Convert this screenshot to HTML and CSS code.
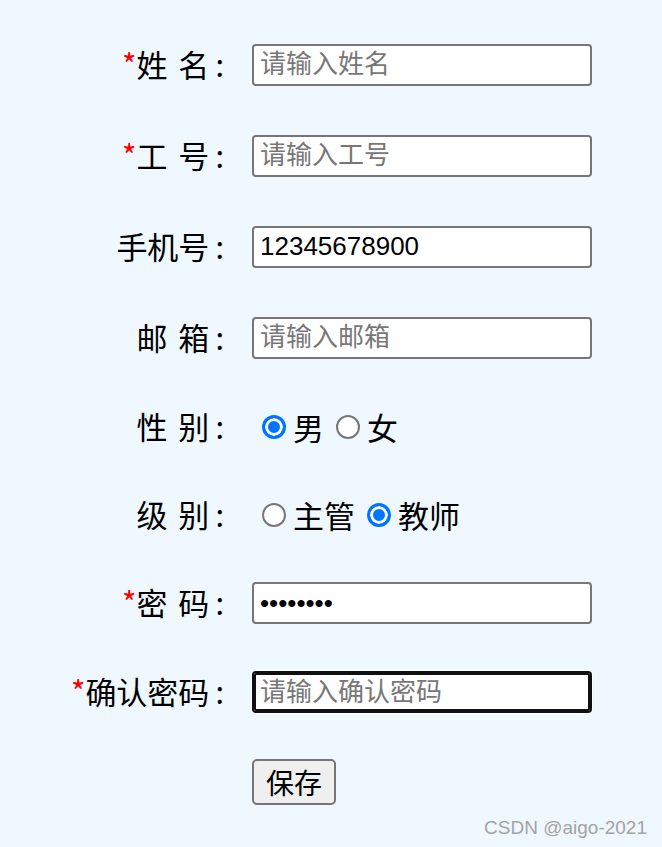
FILE: index.html
```html
<!DOCTYPE html>
<html lang="zh-CN">
  <head>
    <meta charset="UTF-8" />
    <meta name="viewport" content="width=device-width, initial-scale=1.0" />
    <title>添加员工</title>
    <link rel="stylesheet" href="styles.css">
  </head>

  <body>
    <div class="main">
      <form class="staff_form" onsubmit="return false">
        <div class="row">
          <label class="label colon" for="name"><span class="req">姓 名</span></label>
          <input class="field" id="name" type="text" placeholder="请输入姓名" />
        </div>
        <div class="row">
          <label class="label colon" for="job_no"><span class="req">工 号</span></label>
          <input class="field" id="job_no" type="text" placeholder="请输入工号" />
        </div>
        <div class="row">
          <label class="label colon" for="phone">手机号</label>
          <input class="field" id="phone" type="text" value="12345678900" />
        </div>
        <div class="row">
          <label class="label colon" for="email">邮 箱</label>
          <input class="field" id="email" type="text" placeholder="请输入邮箱" />
        </div>
        <div class="row row_short">
          <span class="label colon">性 别</span>
          <div class="choices">
            <label class="choice"><input type="radio" name="sex" checked />男</label>
            <label class="choice"><input type="radio" name="sex" />女</label>
          </div>
        </div>
        <div class="row row_short">
          <span class="label colon">级 别</span>
          <div class="choices">
            <label class="choice"><input type="radio" name="level" />主管</label>
            <label class="choice"><input type="radio" name="level" checked />教师</label>
          </div>
        </div>
        <div class="row row_short">
          <label class="label colon" for="pwd"><span class="req">密 码</span></label>
          <input class="field" id="pwd" type="password" value="12345678" />
        </div>
        <div class="row row_mid">
          <label class="label colon" for="pwd2"><span class="req">确认密码</span></label>
          <input class="field field_focus" id="pwd2" type="password" placeholder="请输入确认密码" />
        </div>
        <div class="row row_mid">
          <span class="label"></span>
          <button class="save_btn" type="submit">保存</button>
        </div>
      </form>
      <div class="mark">CSDN @aigo-2021</div>
    </div>
  </body>
</html>
```

FILE: styles.css
```css
html,
body {
  margin: 0;
  padding: 0;
  height: 100%;
  background-color: #f0f8ff;
  font-family: "Noto Sans CJK SC", sans-serif;
  font-size: 31px;
  color: #000;
}

.main {
  position: relative;
  height: 100%;
  padding-top: 19px;
  box-sizing: border-box;
}

.staff_form {
  display: flex;
  flex-direction: column;
}

.row {
  height: 91px;
  display: flex;
  align-items: center;
}

.row_short {
  height: 88px;
}

.row_mid {
  height: 90px;
}

.label {
  width: 224px;
  margin-right: 28px;
  text-align: right;
  word-spacing: 4px;
  line-height: 40px;
  padding-bottom: 2px;
  flex-shrink: 0;
}

.colon::after {
  content: ":";
  margin-left: 6px;
}

.req {
  position: relative;
}

.req::before {
  content: "*";
  color: red;
  position: absolute;
  right: 100%;
}

.field {
  width: 340px;
  height: 42px;
  margin: 0;
  padding: 0 6px;
  box-sizing: border-box;
  border: 2px solid #767676;
  border-radius: 4px;
  background-color: #fff;
  font-family: "Liberation Sans", "Noto Sans CJK SC", sans-serif;
  font-size: 26px;
  color: #000;
  outline: none;
}

.field::placeholder {
  font-family: "Noto Sans CJK SC", sans-serif;
  color: #777;
}

.field_focus {
  border-color: #101010;
  box-shadow: inset 0 0 0 2px #101010, 0 0 0 1px #fff;
}

.choices {
  display: flex;
  align-items: center;
  padding-bottom: 1px;
}

.choice {
  display: flex;
  align-items: center;
  line-height: 40px;
}

.choice input {
  appearance: none;
  width: 24px;
  height: 24px;
  margin: 0 7px 0 12px;
  box-sizing: border-box;
  border: 2px solid #767676;
  border-radius: 50%;
  background-color: #fff;
}

.choice input:checked {
  border: 3px solid #0075ff;
  background-color: #0075ff;
  box-shadow: inset 0 0 0 3px #fff;
}

.choice:first-child input {
  margin-left: 10px;
}

.save_btn {
  height: 46px;
  margin: 0;
  padding: 0 12px;
  border: 2px solid #767676;
  border-radius: 5px;
  background-color: #efefef;
  font-family: "Noto Sans CJK SC", sans-serif;
  font-size: 28px;
  color: #000;
}

.mark {
  position: absolute;
  right: 15px;
  bottom: 8px;
  font-family: "Liberation Sans", sans-serif;
  font-size: 19px;
  color: #a3a3a3;
}
```
